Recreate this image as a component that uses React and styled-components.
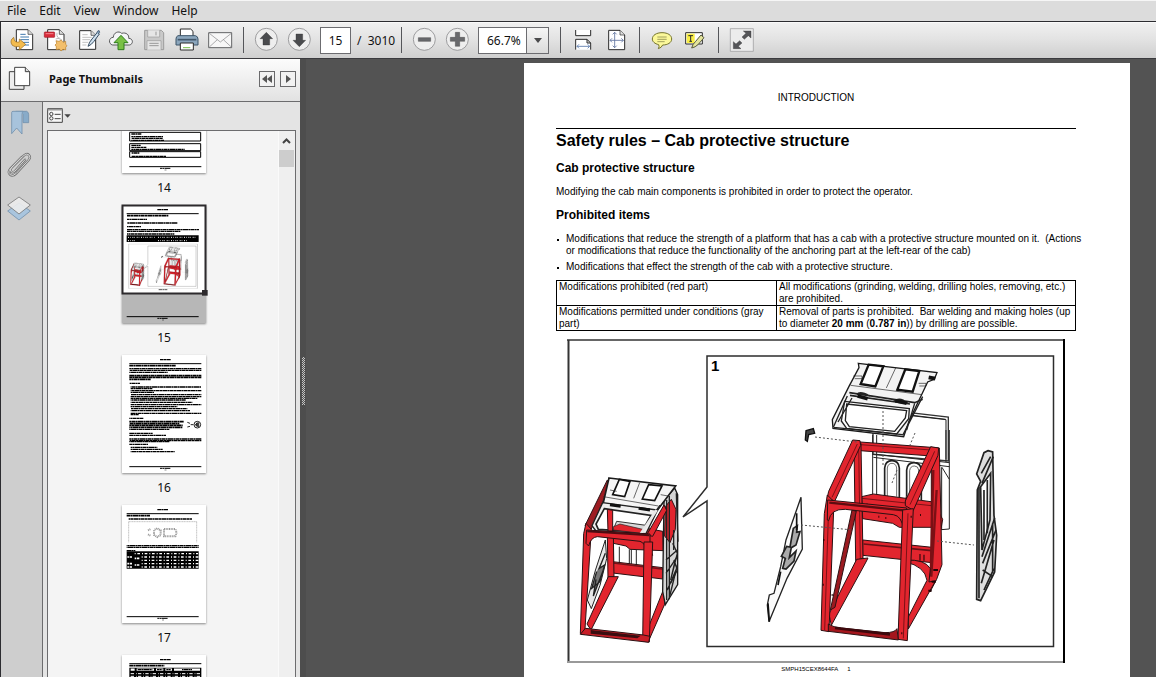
import React from "react";
import styled, { createGlobalStyle, css } from "styled-components";

const ui = `"Noto Sans", "Open Sans", sans-serif`;
const doc = `"Liberation Sans", Arial, sans-serif`;
const ink = "#2b2b2b";

const Global = createGlobalStyle`
  * { box-sizing: border-box; }
  body { margin: 0; background: #535353; font-family: ${ui}; color: #111; }
  button, input, select { font: inherit; color: inherit; }
  svg { display: block; }
`;

const App_ = styled.div`
  display: flex;
  flex-direction: column;
  height: 100vh;
  overflow: hidden;
`;

/* ---------- menu ---------- */
const MenuBar = styled.nav`
  display: flex;
  gap: 13px;
  height: 22px;
  flex: none;
  padding: 0 7px;
  background: #dcdcdc;
  border-top: 1px solid #f6f6f6;
  border-bottom: 1px solid #2c2c30;
`;
const MenuItem = styled.button`
  padding: 0;
  border: 0;
  background: none;
  font-size: 12px;
  line-height: 20px;
`;

/* ---------- toolbar ---------- */
const ToolBar = styled.div`
  display: flex;
  align-items: center;
  height: 37px;
  flex: none;
  padding-left: 5px;
  border-left: 1px solid #2c2c30;
  border-bottom: 1px solid #3a3a3e;
  background: linear-gradient(#f1f1f1, #e2e2e2 50%, #cfcfcf);
  box-shadow: inset 0 1px #fafafa;
`;
const Tool = styled.button`
  width: 33px;
  height: 32px;
  flex: none;
  padding: 0;
  border: 0;
  background: none;
`;
const Separator = styled.div`
  width: 1px;
  height: 26px;
  flex: none;
  margin: 0 6px;
  background: #55565a;
`;
const PageBox = styled.input`
  width: 31px;
  height: 27px;
  margin-left: 4px;
  padding: 0;
  border: 1px solid #6c6c70;
  background: #fff;
  font-size: 12px;
  text-align: center;
`;
const PageTotal = styled.label`
  width: 44px;
  padding-left: 6px;
  font-size: 12px;
  white-space: pre;
`;
const ZoomBox = styled.div`
  display: flex;
  position: relative;
  width: 71px;
  height: 27px;
  margin: 0 5px 0 4px;
  border: 1px solid #6c6c70;
  background: #fff;
`;
const ZoomSelect = styled.select`
  width: 100%;
  padding: 0 0 0 8px;
  border: 0;
  background: none;
  appearance: none;
  font-size: 12px;
`;
const ZoomArrow = styled.span`
  position: absolute;
  inset: 0 0 0 auto;
  display: grid;
  place-items: center;
  width: 22px;
  border-left: 1px solid #6c6c70;
  background: linear-gradient(#f6f6f6, #dadada);
  pointer-events: none;
`;

/* ---------- side panel ---------- */
const Workspace = styled.div`
  display: flex;
  flex: 1;
  min-height: 0;
`;
const Panel = styled.aside`
  display: flex;
  flex-direction: column;
  width: 300px;
  flex: none;
  border-left: 1px solid #2c2c30;
  background: #e4e4e4;
`;
const PanelHead = styled.header`
  display: flex;
  align-items: center;
  height: 43px;
  flex: none;
  padding: 0 4px 2px 7px;
  border-bottom: 1px solid #6c6c6e;
  background: linear-gradient(#fcfcfc, #e2e2e2);
`;
const PanelTitle = styled.h2`
  flex: 1;
  margin: 0;
  padding-left: 17px;
  font-size: 11px;
  font-weight: 700;
  line-height: 16px;
`;
const HeadButton = styled.button`
  display: grid;
  place-items: center;
  width: 16px;
  height: 16px;
  margin-left: 5px;
  padding: 0;
  border: 1px solid #6a6a6c;
  background: #f2f2f2;
`;
const PanelBody = styled.div`
  display: flex;
  flex: 1;
  min-height: 0;
`;
const Rail = styled.div`
  display: flex;
  flex-direction: column;
  align-items: center;
  gap: 15px;
  width: 42px;
  flex: none;
  padding: 6px 6px 0 0;
  border-right: 1px solid #6c6c6e;
  background: #cecece;
`;
const RailButton = styled.button`
  padding: 0;
  border: 0;
  background: none;
`;
const Thumbs = styled.div`
  display: flex;
  flex-direction: column;
  flex: 1;
  padding: 0 4px;
`;
const Options = styled.button`
  height: 28px;
  flex: none;
  padding: 0;
  border: 0;
  background: none;
`;
const ThumbBox = styled.div`
  display: flex;
  flex: 1;
  min-height: 0;
  border: 1px solid #6c6c6e;
  border-bottom: 0;
  background: #f4f4f4;
`;
const ThumbList = styled.div`
  display: flex;
  flex-direction: column;
  align-items: center;
  gap: 2px;
  flex: 1;
  padding-left: 2px;
  overflow: hidden;
`;
const ThumbItem = styled.button`
  display: flex;
  flex-direction: column;
  align-items: center;
  flex: none;
  width: 84px;
  height: 148px;
  padding: 0;
  border: 0;
  background: none;
  font-size: 12px;
  line-height: 30px;
  ${(p) => p.$scrolledBy && css`margin-top: -${p.$scrolledBy}px;`}
`;
const ThumbPage = styled.svg`
  flex: none;
  overflow: visible;
  background: ${(p) => (p.$current ? "#b7b7b7" : "#fff")};
  box-shadow: 0 1px 2px #8a8a8a;
`;
const ScrollTrack = styled.div`
  width: 17px;
  flex: none;
  border-left: 1px solid #fafafa;
  background: #efefef;
`;
const ScrollUp = styled.button`
  display: grid;
  place-items: center;
  width: 15px;
  height: 19px;
  padding: 0;
  border: 0;
  background: none;
`;
const ScrollThumb = styled.div`
  width: 15px;
  height: 17px;
  background: #cdcdcd;
`;

/* ---------- document ---------- */
const Splitter = styled.div`
  width: 6px;
  flex: none;
  padding: 298px 1px 0 2px;
  background: #4d4d4d;
`;
const Grip = styled.div`
  height: 48px;
  background: repeating-conic-gradient(#c4c4c4 0 25%, #535353 0 50%) 0 0 / 2px 2px;
`;
const Viewer = styled.main`
  display: flex;
  flex: 1;
  justify-content: flex-end;
  padding: 4px 26px 0 0;
  overflow: hidden;
  background: #535353;
`;
const Sheet = styled.article`
  width: 606px;
  flex: none;
  align-self: flex-start;
  min-height: 100%;
  padding: 29px 54px 0 32px;
  background: #fff;
  color: #000;
  font-family: ${doc};
  font-size: 10px;
  line-height: 12px;
`;
const RunningHead = styled.div`
  padding-bottom: 24px;
  border-bottom: 1px solid #000;
  text-align: center;
`;
const Title = styled.h1`
  margin: 2px 0 0;
  font-size: 16px;
  line-height: 20px;
`;
const Section = styled.h2`
  margin: 9px 0 10px;
  font-size: 12px;
  line-height: 16px;
`;
const Para = styled.p`
  margin: 0;
`;
const Bullets = styled.ul`
  display: grid;
  gap: 4px;
  margin: 0 -16px 7px 0;
  padding: 0;
  list-style: none;
`;
const Bullet = styled.li`
  display: flex;
  &::before {
    content: "";
    width: 2px;
    height: 2px;
    flex: none;
    margin: 6px 7px 0 1px;
    background: #000;
  }
`;
const Rules = styled.table`
  width: 100%;
  border-collapse: collapse;
  table-layout: fixed;
`;
const Cell = styled.td`
  width: ${(p) => p.$w};
  height: 24px;
  padding: 0 2px;
  border: 1px solid #000;
  vertical-align: top;
`;
const Figure = styled.figure`
  margin: 8px 11px 2px;
`;
const Foot = styled.footer`
  display: flex;
  justify-content: center;
  gap: 9px;
  font-size: 6px;
  line-height: 8px;
`;

/* ---------- toolbar drawings ---------- */
const Icon = ({ x, children }) => (
  <svg width="33" height="32" viewBox={`${x} 72 99 96`} fill="none" stroke={ink} strokeWidth="3" strokeLinejoin="round">
    {children}
  </svg>
);
const Sheetlet = ({ x, y, w, h }) => (
  <>
    <path d={`M${x} ${y}h${w - 14}l14 14v${h - 14}h-${w}z`} fill="#fff" />
    <path d={`M${x + w - 14} ${y}v14h14`} fill="#ddd" strokeWidth="2" />
  </>
);
const Round = ({ cx }) => <circle cx={cx} cy="118" r="33" fill="#eee" stroke="#8d8d8f" strokeWidth="2.5" />;

const fileTools = [
  ["Open", <Icon x="18"><Sheetlet x={49} y={89} w={49} h={60} />
    <path d="M61 103h16M61 111h26M61 119h26M61 127h26M67 135h20" stroke="#3f78ac" />
    <path d="M41 112q-14 10-4 24q8 7 21 3v11l19-17l-19-16v9q-14 2-15-7z" fill="#f3bb4e" stroke="#9a6a19" strokeWidth="2" /></Icon>],
  ["Create PDF", <Icon x="117"><Sheetlet x={143} y={89} w={49} h={60} />
    <path d="M171 98q-3 17 14 21M167 117l12-3" stroke="#999" strokeWidth="2" />
    <rect x="133" y="96" width="31" height="16" rx="2" fill="#d92b3a" stroke="#9e1825" strokeWidth="2" />
    <path d="M137 101h23" stroke="#f3848c" />
    <path d="M184 120l5 7 8-3v9l4 4-4 5v8l-8-2-6 5-5-6-9 2v-9l-4-5 5-5-2-8 9 2z" fill="#f3bf6b" stroke="#b67d28" strokeWidth="2" /></Icon>],
  ["Edit", <Icon x="216"><Sheetlet x={239} y={92} w={48} h={56} />
    <path d="M247 104h16M247 112h28M247 119h24M247 127h18M247 135h12" stroke="#a5a5a5" strokeWidth="2" />
    <path d="M264 139q4-14 12-22l16-20 6 5-16 22q-7 10-18 15z" fill="#cfe0ee" stroke="#364d63" />
    <path d="M290 98l4-6q5-2 5 5l-4 5" fill="#7594b0" stroke="#364d63" strokeWidth="2" /></Icon>],
  ["Upload", <Icon x="315"><path d="M338 135c-14-3-12-23 2-23c0-14 16-21 25-12c14-4 23 5 21 15c14 0 15 18 2 20z" fill="#f4f5f6" stroke="#58595b" />
    <path d="M363 106l21 22h-12v21h-18v-21h-12z" fill="#79c045" stroke="#2e7d1d" /></Icon>],
  ["Save", <Icon x="414"><path d="M434 91h50l7 7v51h-57z" fill="#c9c9c9" stroke="#9c9c9c" />
    <path d="M443 91v20h36v-20M441 149v-27h42v27" fill="#e6e6e6" stroke="#9c9c9c" strokeWidth="2" />
    <path d="M468 95v11M448 130h28M448 137h28" stroke="#999" /></Icon>],
  ["Print", <Icon x="513"><path d="M541 110v-23h31l7 7v16" fill="#fff" />
    <path d="M534 107h52q8 2 8 10v18h-66v-18q0-8 6-10z" fill="#8ba6bd" stroke="#3c5468" />
    <path d="M533 119h56" stroke="#42576a" strokeWidth="5" />
    <path d="M541 129h39v21h-39z" fill="#fff" /><path d="M549 143h22" stroke="#78c04d" /></Icon>],
  ["Email", <Icon x="612"><rect x="626" y="98" width="69" height="45" fill="#f7f7f7" stroke="#636466" />
    <path d="M628 100l33 26l33-26M628 141l24-22M694 141l-24-22" stroke="#838486" strokeWidth="2" /></Icon>],
];
const pageTools = [
  ["Previous page", <Icon x="750"><Round cx={799} /><path d="M799 97l19 19h-9v19h-20v-19h-9z" fill="#4a4b4e" strokeWidth="1" /></Icon>],
  ["Next page", <Icon x="849"><Round cx={898} /><path d="M898 140l19-19h-9v-19h-20v19h-9z" fill="#4a4b4e" strokeWidth="1" /></Icon>],
];
const zoomTools = [
  ["Zoom out", <Icon x="24"><Round cx={73} /><path d="M55 113h37v11h-37z" fill="#68696c" strokeWidth="1" /></Icon>],
  ["Zoom in", <Icon x="123"><Round cx={172} /><path d="M166 97h13v15h15v12h-15v15h-13v-15h-15v-12h15z" fill="#68696c" strokeWidth="1" /></Icon>],
];
const fitTools = [
  ["Fit width", <Icon x="501"><path d="M527 90v17h45v-17M527 149v-31h34l11 11v20M561 118v11h11" fill="#fff" />
    <path d="M531 139h38M537 133l-6 6 6 6M563 133l6 6-6 6" stroke="#5576a8" strokeWidth="2.5" /></Icon>],
  ["Fit page", <Icon x="600"><Sheetlet x={626} y={91} w={48} h={58} />
    <path d="M644 97v46M630 121h40M638 103l6-6 6 6M638 137l6 6 6-6M636 115l-6 6 6 6M664 115l6 6-6 6" stroke="#5b709c" strokeWidth="2.5" /></Icon>],
];
const noteTools = [
  ["Comment", <Icon x="741"><path d="M789 98c18 0 29 8 29 19s-12 18-27 18q-3 8-13 11q4-6 1-12c-12-3-19-9-19-17c0-11 12-19 29-19z" fill="#fbf89a" stroke="#75742b" />
    <path d="M775 111h28M775 118h28M775 125h22" stroke="#77773c" strokeWidth="2" /></Icon>],
  ["Highlight", <Icon x="840"><path d="M860 98h50v34h-50z" fill="#fff" /><path d="M863 101h24v28h-24z" fill="#f9ee45" stroke="none" />
    <path d="M868 107h14M875 107v17M871 124h8" /><path d="M878 144q3-12 12-20l16-19 9 8-17 20q-9 9-20 11z" fill="#e4e59c" stroke="#57583a" /></Icon>],
];
const readTool = ["Read mode", <Icon x="978"><rect x="994" y="86" width="69" height="68" fill="#ececec" stroke="#949496" strokeWidth="2" />
  <path d="M1056 93v21l-8-7-12 11-7-7 12-11-8-7zM1003 146v-21l8 7 11-10 7 7-11 10 8 7z" fill="#555659" strokeWidth="1" /></Icon>];

const Tools = ({ items }) => items.map(([name, icon]) => <Tool key={name} aria-label={name} title={name}>{icon}</Tool>);

/* ---------- illustration ---------- */
const P = (props) => <path fill="#e2252e" stroke="#2a1012" strokeWidth="3" strokeLinejoin="round" {...props} />;
const L = (props) => <path fill="none" stroke="#222" strokeWidth="3" {...props} />;

const SmallCab = () => (
  <g transform="translate(560 460) scale(.3333)">
    <L d="M160 255v60M178 260v55M208 268v45M214 268v45M229 270v45M160 180l100 14M195 178l60 8" />
    <P d="M160 200l30-8 118 22 2 58-100-4-12-10-38-8z" />
    <P d="M158 305l150 18v34l-150-18z" />
    <path d="M160 309l146 18" stroke="#711419" strokeWidth="5" />
    <P d="M141 150h18l3 200-18 6z" />
    <P d="M145 350l30 0-82 160-12-18z" />
    <P d="M316 375l-2 58-46 105-6-28z" />
    <path d="M312 120l32-36 9 20v270l-37 60-8-40z" fill="#d5d5d5" stroke="#1c1c1c" strokeWidth="4" />
    <P d="M316 140l18-22 14 30-2 60-16 40-16-20z" />
    <L d="M320 120v300M328 108v310M341 210v60M318 300l34-30M322 390l30-70M318 340l34-50M330 405l22-90" strokeWidth="4" />
    <L d="M349 100l5 145M338 250l14 30-20 80 14-60M342 300l10 30-20 40" strokeWidth="4" />
    <path d="M136 240q-32 90-54 180l12 26 26-70 20-80z" fill="#e8e8e8" stroke="#222" strokeWidth="3" />
    <path d="M136 280l-18 45 16-10-14 50-25 20 15-50M130 330l-30 78 8-50" fill="#777" stroke="#222" strokeWidth="4" />
    <P d="M142 60l10 10-58 137-19-10z" fill="#9d1c22" />
    <path d="M147 54l200 24-56 74-162-20z" fill="#f5f5f5" stroke="#1b1b1b" strokeWidth="5" />
    <path d="M178 58l32 6-16 46-36-6zM266 74l40 4-22 44-37-5z" fill="#fff" stroke="#111" strokeWidth="5" />
    <L d="M239 68l-18 47M150 90l20 4M302 104l22 4M130 110l165 28" strokeWidth="2" />
    <path d="M128 128l162 22 10-14-42 85-150-8-12-16z" fill="#eee" stroke="#222" strokeWidth="4" />
    <path d="M133 146l140 20-28 50-130-8-7-16z" fill="#fff" stroke="#222" strokeWidth="5" />
    <P d="M142 148l16 3v62h-14z" />
    <path d="M170 184l88 12-10 16-88-4z" fill="#d9d9d9" stroke="#333" strokeWidth="3" />
    <path d="M160 200l20-8 68 16-4 12-84-10z" fill="#e2252e" stroke="#222" strokeWidth="2" />
    <L d="M150 134l32 5M236 145l34 5" strokeWidth="9" stroke="#111" />
    <P d="M312 135l8 16-42 78-18-4z" />
    <path d="M290 150l-48 72" stroke="#e8e8e8" strokeWidth="8" />
    <P d="M78 190l16 18-20 315-13-2 10-300z" />
    <P d="M80 210l190 12v24q-2 24 8 40l-22-12q2-24-16-30l-128-14q-20 2-26 28l-8-8z" />
    <L d="M82 214l186 12" strokeWidth="6" stroke="#4b0d12" />
    <P d="M252 246h26l-10 300-20-2z" />
    <P d="M76 505l174 20 20 4-4 18-205-24z" fill="#c81e27" />
    <path d="M92 510l150 17-10 8-140-14z" fill="#3a0d10" />
  </g>
);

const RedFrame = () => (
  <g transform="translate(760 430) scale(.3333)">
    <L d="M338 15v186M350 15v180M568 0v297l-24 2M558 0v96M340 72l228 26M340 82l228 28M545 112v188M546 112l22 36" />
    <L d="M374 198v-84q2-22 22-22t22 22v88M440 200v-80q2-22 22-22t22 22v90" strokeWidth="5" />
    <L d="M382 198v-84q2-14 14-14t14 14v86M449 200v-78q2-14 14-14t13 12v60" strokeWidth="2" />
    <P d="M305 200l35-8 180 24 28 52-4 24-126 0-20-12-90-14z" />
    <path d="M320 222h2M355 260h3M376 264h3M480 255h3M395 240l12 2M440 200v20" stroke="#3a0508" strokeWidth="6" />
    <L d="M305 205l210 22" stroke="#7b1015" />
    <P d="M308 330l208 22v46l-208-22z" />
    <path d="M311 342l204 20M480 372v20M492 374v18" stroke="#651016" strokeWidth="5" />
    <P d="M300 36l214 16v26l-214-16z" />
    <L d="M302 44l210 16" stroke="#7b1015" />
    <P d="M282 40h21l6 344-22 8z" />
    <L d="M296 50l5 335" stroke="#7b1015" />
    <P d="M290 388l34-4-6 12-104 190-7-34z" />
    <P d="M276 240l13 4-64 288-14 8z" fill="#9b1a20" />
    <P d="M514 52l24 2 8 350-16 44-20 38-6-34 10-40z" />
    <path d="M520 120l-8 320M530 180l-16 260" stroke="#7b1015" strokeWidth="7" />
    <P d="M436 390q60-2 75 26l-4 40 20-4-82 145 0-36 56-110q-6-42-65-55z" />
    <P d="M278 30l22 2 2 14-78 168-22-12 4-18z" />
    <L d="M292 42l-76 160" stroke="#7b1015" />
    <P d="M512 50l24 4-2 22-74 165-24-14 0-14z" />
    <L d="M524 64l-74 160" stroke="#7b1015" />
    <P d="M202 195l20 20-15 390-24-4 10-350z" />
    <L d="M206 230l-12 370" stroke="#7b1015" />
    <P d="M203 210l237 24 4 66-14-2q-4-40-30-44l-144-16q-44-2-50 34l-4-2z" />
    <L d="M208 218l230 24" stroke="#5c0c10" strokeWidth="7" />
    <P d="M428 240l32-4-18 396-28-4z" />
    <L d="M444 250l-14 375" stroke="#7b1015" />
    <P d="M205 582q14 10 40 12l130 14q30 0 36-12l4 34-210-26z" fill="#a5161d" />
    <path d="M225 594l165 19" stroke="#3e080c" strokeWidth="8" />
    <path d="M188 464h3M190 330h3M215 495h3M424 610h3M452 260h3M520 420h14M515 455h12M505 482h10" stroke="#200305" strokeWidth="6" />
  </g>
);

const Roof = () => (
  <g transform="translate(790 340) scale(.3333)">
    <path d="M249 205l226 26v132l-226-20z" fill="#fff" stroke="#333" strokeWidth="4" />
    <L d="M260 215l208 24v120M249 212l218 26" />
    <path d="M205 70l236 28-8 20-20 8-56 118-16 46-212-25-2-26 50-100 30-56z" fill="#f3f3f3" stroke="#1a1a1a" strokeWidth="4" />
    <path d="M236 74l44 5-24 60-44-7zM346 88l42 5-20 62-46-6z" fill="#fff" stroke="#111" strokeWidth="7" />
    <L d="M317 84l-28 60M182 136l214 28M190 108h26v8h-22M386 130h22v8h-20" strokeWidth="2" />
    <L d="M178 158l196 30 24-10M180 166l180 26M200 164q10-12 38 4M312 184q18-14 40 6" strokeWidth="5" />
    <path d="M203 168l30 8M316 182l34 8M416 112l20 4" stroke="#111" strokeWidth="11" />
    <path d="M164 184l194 22-2 30-36 46-150-17-16-22z" fill="#fff" stroke="#222" strokeWidth="4" />
    <L d="M170 192l180 20-4 22-32 40-136-14-12-18zM172 168l-42 94M186 174l-42 72M398 170l-60 116M374 190l-24 80M132 262l205 22" strokeWidth="4" />
  </g>
);

const SidePieces = () => (
  <g transform="translate(760 430) scale(.3333)">
    <path d="M123 202l4 155-46 88-54 130-5-50 6-30 14-5 20-80 16-80z" fill="#fafafa" stroke="#222" strokeWidth="4" />
    <path d="M100 295l12-8-2 20 10-2-12 40-14 8-6 30 20-20-6 30-24 24-10-2 8-30-12-6 16-30 10 2z" fill="#aaa" stroke="#222" strokeWidth="5" />
    <path d="M24 520l4 55M110 250v50M54 465l8-40" stroke="#111" strokeWidth="5" />
    <path d="M684 62l14 4 4 190 8 60-6 110-42 86-12-4 2-328 10-26-12-22 22-64z" fill="#dedede" stroke="#222" strokeWidth="5" />
    <path d="M692 130l-2 140-24 90-4-190z" fill="#fff" stroke="#222" strokeWidth="5" />
    <L d="M657 170v335M700 80l-34 80M664 130l28-50M672 180v150M682 150v160M666 380l38-116M668 400l40-100M664 460l38-130M672 480l30-64M668 420l30 20M698 280v150" strokeWidth="5" />
    <path d="M138 2l22-6 4 14-18 4-4 20-6-4z" fill="#444" stroke="#111" strokeWidth="4" />
  </g>
);

const Illustration = ({ label = true, ...rest }) => (
  <svg viewBox="567 339 498 324" role="img" aria-label="Cab protective structure" {...rest}>
    <path d="M567 339h498v324h-498z" fill="#fff" />
    <path d="M568.5 663V340" fill="none" stroke="#333" strokeWidth="2" />
    <path d="M567 340h498" stroke="#333" strokeWidth="1.5" />
    <path d="M567 662h498" stroke="#999" strokeWidth="2" />
    <path d="M1064 339v324" stroke="#000" strokeWidth="2" />
    <path d="M707 487V356h346.500v290.500H707V501l-24 16z" fill="none" stroke="#2c2c2c" strokeWidth="1.500" />
    {label && <text x="711" y="371" fontFamily="Liberation Sans, Arial, sans-serif" fontSize="15" fontWeight="700">1</text>}
    <SmallCab />
    <Roof />
    <RedFrame />
    <SidePieces />
    <path d="M883 407v58M815 437l42 5M915 433l-5 12M897 470l-5 13M801 525l52 5M937 541l37 4" fill="none" stroke="#555" strokeDasharray="2 2" />
  </svg>
);

/* ---------- thumbnails ---------- */
const Greek = ({ rows, dash = "11 1 6 1 16 1 5 1" }) =>
  rows.map(([x, y, w, h = 4], i) => (
    <path key={i} d={`M${x} ${y}h${w}`} stroke="#000" strokeWidth={h} strokeDasharray={dash} strokeDashoffset={i * 5} />
  ));
const Frame = ({ x, w }) => (
  <>
    <path d={`M${x} 26h${w}M${x} 335h${w}`} stroke="#000" strokeWidth="3" />
    <Greek rows={[[x + w / 2 - 16, 14, 32, 4], [x + w / 2 - 16, 340, 32, 3], [x + w / 2 - 2, 345, 5, 2]]} />
  </>
);

const Page14 = () => (
  <>
    <Frame x={22} w={216} />
    <path d="M23 232h213v26H23zM23 266h213v21H23zM23 290h213v17H23z" fill="none" stroke="#000" strokeWidth="3" />
    <Greek rows={[[28, 237, 30], [28, 245, 95], [28, 250, 95], [28, 256, 98], [28, 271, 28], [28, 277, 45], [28, 283, 160], [28, 294, 24], [28, 304, 105]]} />
  </>
);
const Page15 = () => (
  <>
    <path d="M0 0h252v264H0z" fill="#fff" />
    <Frame x={14} w={216} />
    <Greek rows={[[15, 32, 124, 5], [15, 43, 60, 4], [15, 54, 152], [15, 65, 42, 4], [15, 74, 216], [15, 79, 160, 4], [15, 87, 142]]} />
    <path d="M14 91h216v20H14z" fill="#000" />
    <path d="M18 97h80M108 97h112M18 107h24M108 107h90" stroke="#fff" strokeWidth="3" strokeDasharray="3 3 2 5" />
    <Illustration label={false} x="19" y="116" width="208" height="135" />
    <Greek rows={[[110, 254, 26, 2]]} />
    <path d="M1.500 1.500h249v264H1.500z" fill="none" stroke="#2d2a2d" strokeWidth="6" />
    <path d="M240 255h17v17h-17z" fill="#2d2a2d" />
  </>
);
const Page16 = () => (
  <>
    <Frame x={22} w={216} />
    <Greek rows={[[22, 32, 140, 5], [22, 41, 216], [22, 46, 216], [22, 52, 115], [22, 62, 216, 5], [22, 67, 216, 5], [22, 73, 64, 5], [22, 85, 32], [26, 96, 212], [26, 101, 65], [26, 107, 212], [26, 112, 70], [26, 119, 212, 4], [26, 125, 212], [26, 130, 200], [26, 135, 165], [26, 142, 185], [26, 149, 212], [26, 155, 140], [26, 161, 170], [26, 167, 178], [26, 175, 212, 4], [26, 179, 24], [22, 190, 42, 4], [22, 200, 163, 5], [22, 206, 150, 5], [22, 211, 160, 5], [22, 217, 160, 5], [22, 223, 120, 4], [22, 235, 70, 4], [22, 241, 110], [22, 252, 216], [22, 257, 216], [22, 260, 120], [22, 268, 56], [26, 277, 80], [26, 283, 96], [26, 290, 132]]} />
    <circle cx="226" cy="209" r="10" fill="none" stroke="#222" strokeWidth="3" />
    <path d="M196 202l8 3M196 216l8-2M206 209h8M220 209l6-6v12zM230 202v14" fill="#333" stroke="#222" strokeWidth="3" />
  </>
);
const Page17 = () => (
  <>
    <Frame x={14} w={216} />
    <Greek rows={[[14, 32, 70, 5], [20, 42, 190], [14, 122, 216], [14, 127, 216, 4], [14, 137, 26]]} />
    <path d="M20 50v62M224 50v62M20 50h204" fill="none" stroke="#aaa" strokeWidth="2" strokeDasharray="4 1" />
    <path d="M78 76l8-4M78 88l8 4M98 74l8-4 10 6v14l-10 6-10-6v-14M126 72h34l4 10-4 12h-34z" fill="none" stroke="#999" strokeWidth="6" strokeDasharray="3 2" />
    <path d="M14 139h216v52H14z" fill="#000" />
    <path d="M16 156h17M16 176h17M16 186h17M38 160h17M38 180h17" stroke="#fff" strokeWidth="5" strokeDasharray="5 2 7 3" />
    <path d="M38 146h190M59 156h170M59 166h170M59 176h170M59 186h170" stroke="#fff" strokeWidth="4" strokeDasharray="3 5 8 6" />
  </>
);
const Page18 = () => (
  <>
    <Frame x={22} w={216} />
    <Greek rows={[[22, 32, 105, 5]]} />
    <path d="M22 38h216v86H22z" fill="#000" />
    <path d="M26 44h12M44 44h52M102 44h22M130 44h20M156 44h78" stroke="#fff" strokeWidth="7" />
    <path d="M26 56h210M26 64h210" stroke="#fff" strokeWidth="3" strokeDasharray="10 6 2 4" />
    <Greek rows={[[47, 44, 44], [105, 44, 16], [132, 44, 14], [180, 44, 30]]} />
  </>
);
const pages = [
  { n: 14, Page: Page14, caption: "14" },
  { n: 15, Page: Page15, caption: "15" },
  { n: 16, Page: Page16, caption: "16" },
  { n: 17, Page: Page17, caption: "17" },
  { n: 18, Page: Page18 },
];

const Panes = () => (
  <Rail>
    <RailButton aria-label="Bookmarks">
      <svg width="28" height="28" viewBox="12 156 84 84" fill="#a7c3dc" stroke="#7391ad" strokeWidth="2.500">
        <path d="M44 166h33q6 2 6 10v24h-17v-26" fill="#88abc9" />
        <path d="M32 169q0-3 4-3h30q-3 3-3 10v58l-16-18-15 17z" />
      </svg>
    </RailButton>
    <RailButton aria-label="Attachments">
      <svg width="28" height="28" viewBox="14 286 84 84" fill="none" strokeLinecap="round">
        {[["#737373", 7], ["#d8d8d8", 3]].map(([c, w]) => (
          <path key={c} stroke={c} strokeWidth={w} d="M74 312l-30 34q-7 7-12 2t2-12l37-37q9-7 15-1t-1 15l-37 40q-11 11-19 4t2-19l33-34" />
        ))}
      </svg>
    </RailButton>
    <RailButton aria-label="Layers">
      <svg width="28" height="28" viewBox="15 414 84 84" strokeWidth="2.500" strokeLinejoin="round">
        <path d="M57 441l34 24-34 27-34-27z" fill="#a9c5de" stroke="#7391ad" />
        <path d="M57 423l34 24-34 27-34-27z" fill="#ececec" fillOpacity=".9" stroke="#777" />
      </svg>
    </RailButton>
  </Rail>
);

export default function App() {
  return (
    <App_>
      <Global />
      <MenuBar>
        {["File", "Edit", "View", "Window", "Help"].map((m) => <MenuItem key={m}>{m}</MenuItem>)}
      </MenuBar>
      <ToolBar>
        <Tools items={fileTools} />
        <Separator />
        <Tools items={pageTools} />
        <PageBox id="page" defaultValue="15" />
        <PageTotal htmlFor="page">/  3010</PageTotal>
        <Separator />
        <Tools items={zoomTools} />
        <ZoomBox>
          <ZoomSelect aria-label="Zoom level" defaultValue="66.7%"><option>66.7%</option></ZoomSelect>
          <ZoomArrow><svg width="8" height="5" viewBox="0 0 8 5"><path d="M0 0h8L4 5z" fill="#4a4a4c" /></svg></ZoomArrow>
        </ZoomBox>
        <Separator />
        <Tools items={fitTools} />
        <Separator />
        <Tools items={noteTools} />
        <Separator />
        <Tools items={[readTool]} />
      </ToolBar>
      <Workspace>
        <Panel>
          <PanelHead>
            <svg width="24" height="26" viewBox="24 34 72 78" fill="#fff" stroke="#404040" strokeWidth="3">
              <path d="M28 51h44v53H28z" fill="#eee" />
              <path d="M44 38h32l13 13v42H44z" /><path d="M76 38v13h13" fill="#ddd" />
            </svg>
            <PanelTitle>Page Thumbnails</PanelTitle>
            <HeadButton aria-label="Collapse"><svg width="10" height="8" viewBox="0 0 10 8"><path d="M5 0v8L0 4zM10 0v8L5 4z" fill="#555" /></svg></HeadButton>
            <HeadButton aria-label="Expand"><svg width="5" height="8" viewBox="0 0 5 8"><path d="M0 0l5 4-5 4z" fill="#555" /></svg></HeadButton>
          </PanelHead>
          <PanelBody>
            <Panes />
            <Thumbs>
              <Options aria-label="Options">
                <svg width="24" height="16" viewBox="141 153 72 48" fill="none" stroke="#444" strokeWidth="3">
                  <path d="M143 155h44v41h-44z" fill="#f7f7f7" /><path d="M143 158h44" stroke="#999" strokeWidth="5" />
                  <circle cx="154" cy="171" r="5" /><circle cx="154" cy="184" r="5" />
                  <path d="M164 172h18M164 185h18" /><path d="M193 172h19l-9 10z" fill="#444" stroke="none" />
                </svg>
              </Options>
              <ThumbBox>
                <ThumbList>
                  {pages.map(({ n, Page, caption }, i) => (
                    <ThumbItem key={n} aria-label={`Page ${n}`} $scrolledBy={i === 0 ? 76 : 0}>
                      <ThumbPage $current={n === 15} width="84" height="118" viewBox="0 0 252 354"><Page /></ThumbPage>
                      {caption}
                    </ThumbItem>
                  ))}
                </ThumbList>
                <ScrollTrack>
                  <ScrollUp aria-label="Scroll up"><svg width="9" height="6" viewBox="0 0 9 6"><path d="M1 5l3.500-3.500L8 5" fill="none" stroke="#444" strokeWidth="2" /></svg></ScrollUp>
                  <ScrollThumb />
                </ScrollTrack>
              </ThumbBox>
            </Thumbs>
          </PanelBody>
        </Panel>
        <Splitter><Grip /></Splitter>
        <Viewer>
          <Sheet>
            <RunningHead>INTRODUCTION</RunningHead>
            <Title>Safety rules – Cab protective structure</Title>
            <Section>Cab protective structure</Section>
            <Para>Modifying the cab main components is prohibited in order to protect the operator.</Para>
            <Section>Prohibited items</Section>
            <Bullets>
              <Bullet>
                <span>
                  Modifications that reduce the strength of a platform that has a cab with a protective structure mounted on it.{"\u00a0"} (Actions
                  <br />
                  or modifications that reduce the functionality of the anchoring part at the left-rear of the cab)
                </span>
              </Bullet>
              <Bullet>Modifications that effect the strength of the cab with a protective structure.</Bullet>
            </Bullets>
            <Rules>
              <tbody>
                <tr>
                  <Cell $w="220px">Modifications prohibited (red part)</Cell>
                  <Cell>All modifications (grinding, welding, drilling holes, removing, etc.) are prohibited.</Cell>
                </tr>
                <tr>
                  <Cell>Modifications permitted under conditions (gray part)</Cell>
                  <Cell>
                    Removal of parts is prohibited.{"\u00a0"} Bar welding and making holes (up
                    <br />
                    to diameter <b>20 mm</b> (<b>0.787 in</b>)) by drilling are possible.
                  </Cell>
                </tr>
              </tbody>
            </Rules>
            <Figure><Illustration width="100%" /></Figure>
            <Foot><span>SMPH15CEX8644FA</span><span>1</span></Foot>
          </Sheet>
        </Viewer>
      </Workspace>
    </App_>
  );
}
